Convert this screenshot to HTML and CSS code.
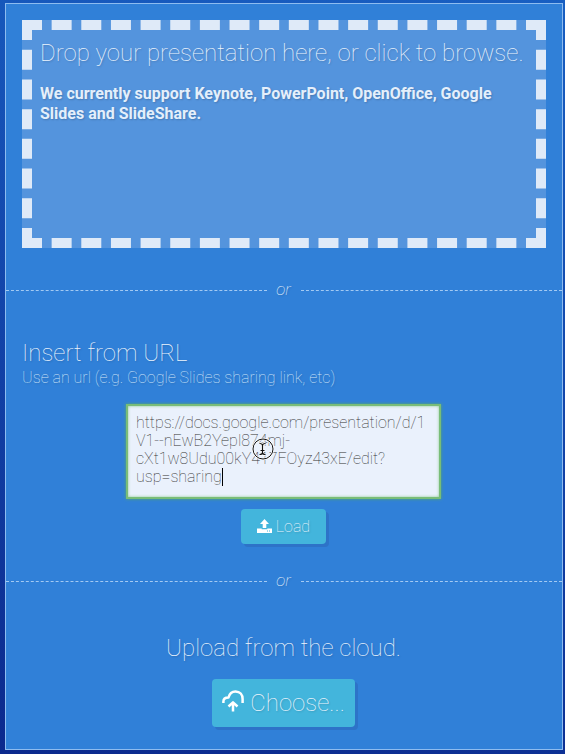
FILE: index.html
```
<!DOCTYPE html>
<html lang="en">
<head>
<meta charset="utf-8">
<title>Import presentation</title>
<link rel="stylesheet" href="styles.css">
</head>
<body>
<main class="panel">
  <section class="dropzone">
    <h1 class="title drop-title">Drop your presentation here, or click to browse.</h1>
    <p class="formats">We currently support Keynote, PowerPoint, OpenOffice, Google Slides and SlideShare.</p>
  </section>
  <div class="divider"><span class="rule"></span><em class="or">or</em><span class="rule"></span></div>
  <section class="url-section">
    <h2 class="title url-title">Insert from URL</h2>
    <p class="hint">Use an url (e.g. Google Slides sharing link, etc)</p>
    <div class="url-box">https://docs.google.com/presentation/d/1<br>V1--nEwB2Yepl874mj-<br>cXt1w8Udu00kY417FOyz43xE/edit?<br>usp=sharing<span class="caret"></span>
      <svg class="pointer" viewBox="0 0 22 22" fill="none"><circle cx="11" cy="11" r="10" stroke="#fff" stroke-width="2"/><circle cx="11" cy="11" r="10" stroke="#111"/><path d="M7.500 5.500q3 0 3 2v7q0 2-3 2M13.500 5.500q-3 0-3 2M13.500 16.500q-3 0-3-2M8.500 12.500h4" stroke="#fff" stroke-width="3"/><path d="M7.500 5.500q3 0 3 2v7q0 2-3 2M13.500 5.500q-3 0-3 2M13.500 16.500q-3 0-3-2M8.500 12.500h4" stroke="#111" stroke-width="1.200"/></svg>
    </div>
    <button class="button load"><svg class="load-icon" viewBox="0 0 15 15" fill="#fff"><path d="M7.500 0 12 5H9.300v4H5.700V5H3z"/><path d="M0 9.500h4.700v.8h5.600v-.8H15V14H0z"/><path d="M10 12h1M12 12h1" stroke="#43b5dc"/></svg>Load</button>
  </section>
  <div class="divider second"><span class="rule"></span><em class="or">or</em><span class="rule"></span></div>
  <section class="cloud-section">
    <h2 class="title cloud-title">Upload from the cloud.</h2>
    <button class="button choose"><svg class="cloud-icon" viewBox="0 0 22 22" fill="none" stroke="#fff" stroke-width="2.500" stroke-linejoin="round"><path d="M1.400 13V11.500Q1.400 7.600 6.500 7.500Q8 1.400 13.500 1.400C18 1.400 20.600 4.500 20.600 9V13"/><path d="M11 21.500V12.500M6.500 16.500l4.500-4.200 4.500 4.200"/></svg>Choose...</button>
  </section>
</main>
</body>
</html>
```
FILE: styles.css
```
* { box-sizing: border-box; }
body {
  margin: 0;
  height: 754px;
  padding: 3px 2px 4px 5px;
  overflow: hidden;
  background: linear-gradient(12deg, #0b298d 0%, #1244a9 50%, #185fc2 100%);
  font-family: Roboto, "Liberation Sans", sans-serif;
  font-weight: 100;
  color: #edf5fe;
  text-shadow: 1px 1px 2px rgba(0, 0, 0, .18);
}
.panel {
  display: flex;
  flex-direction: column;
  width: 558px;
  height: 747px;
  border: 1px solid #8dbcf0;
  background: #3080d8;
}
.title, .formats, .hint { margin: 0; }
.title { font-size: 24px; font-weight: 100; line-height: 30px; white-space: nowrap; }
.dropzone {
  height: 228px;
  margin: 16px 16px 0;
  padding: 8px;
  border: 10px dashed #dfeaf8;
  background: #5494dd;
}
.drop-title { line-height: 30px; }
.formats { margin-top: 16px; font-size: 16px; font-weight: 700; line-height: 20px; color: #e4effb; }
.divider { display: flex; align-items: center; height: 20px; margin-top: 32px; }
.rule { flex: 1; border-top: 1px dashed #a3caf3; }
.or { width: 34px; padding: 0 1px 2px 0; font-size: 17px; line-height: 20px; text-align: center; }
.url-section { display: flex; flex-direction: column; align-items: center; padding: 38px 17px 0 16px; }
.url-title, .hint { align-self: flex-start; }
.hint { font-size: 16px; line-height: 20px; color: #cfe4fa; }
.url-box {
  position: relative;
  width: 315px;
  height: 95px;
  margin-top: 16px;
  padding: 8px;
  border: 2px solid #79bd78;
  background: #eaf1fc;
  box-shadow: 0 0 3px #5cae62, inset 0 0 3px #8bc98b;
  color: #333;
  font-size: 16px;
  line-height: 18px;
  white-space: nowrap;
  text-shadow: none;
}
.caret { display: inline-block; width: 1px; height: 18px; background: #000; vertical-align: top; }
.pointer { position: absolute; left: 124px; top: 32px; width: 22px; height: 22px; }
.button {
  display: flex;
  align-items: center;
  justify-content: center;
  padding: 0;
  border: 0;
  border-radius: 4px;
  background: #43b5dc;
  box-shadow: 3px 3px 0 #2d73c8;
  color: #edf5fe;
  font-family: inherit;
  font-weight: 100;
  text-shadow: inherit;
}
.load { width: 85px; height: 35px; margin-top: 10px; gap: 4px; font-size: 16px; }
.load-icon { width: 15px; height: 15px; }
.second { margin-top: 27px; }
.cloud-section { display: flex; flex-direction: column; align-items: center; padding: 42px 1px 0 0; }
.choose { width: 143px; height: 48px; margin-top: 16px; gap: 6px; font-size: 24px; }
.cloud-icon { width: 22px; height: 22px; margin-bottom: 4px; }
```
